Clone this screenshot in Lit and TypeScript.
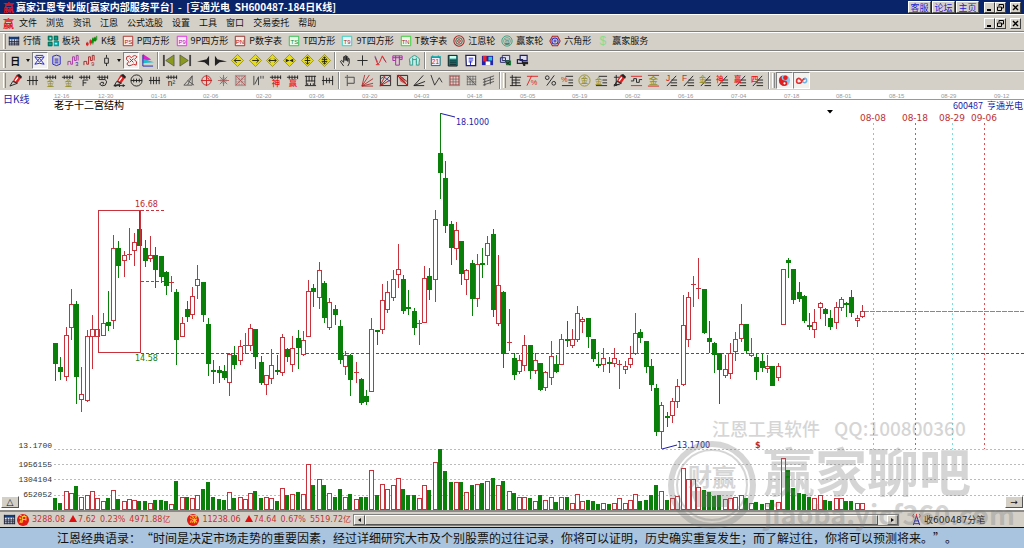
import { LitElement, html, svg, css } from "lit";
import { customElement, property } from "lit/decorators.js";

type Layer = { s?: string; f?: string; d?: string; w?: number; t?: string; x?: number; y?: number; z?: number };
const s = (c: string, d: string, w = 1): Layer => ({ s: c, d, w });
const f = (c: string, d: string): Layer => ({ f: c, d });
const t = (c: string, text: string, x: number, y: number, z: number): Layer => ({ f: c, t: text, x, y, z });

const K = "#222";
const R = "#d22";
const Y = "#e6dc1e";
const O = "#94902a";
const ring = (x: number, y: number, r: number) => `M${x - r} ${y}a${r} ${r} 0 1 0 ${2 * r} 0a${r} ${r} 0 1 0 ${-2 * r} 0`;
const comb = "M1 3.5H13M3.5 1.5V5.5M6.5 1.5V5.5M9.5 1.5V5.5M12.5 1.5V5.5";
const fan = "M1 12.5H13M1 12.5L13 9.5M1 12.5L12 5M1 12.5L7 1.5";
const mesh = "M2 2.5H12M2 5.5H12M2 8.5H12M2 11.5H12M2.5 2V12M5.5 2V12M8.5 2V12M11.5 2V12";
const steps = "M6 12.5H13M6 9.5H13M7 6.5H13M2 13L12 2";
const frame = "M1.5 1.5H12.5V12.5H1.5Z";
const diamond = [f(Y, "M7 .5L13.5 7L7 13.5L.5 7Z"), s("#8a8418", "M7 .5L13.5 7L7 13.5L.5 7Z", 0.8)];
const pencil = [f("#e02020", "M4 8L8 1L13 4L9 10Z"), f("#222", "M8 1L11 0L14 3L13 5Z"), s(K, "M4 8L1 13L9 10M4 8L9 10"), f("#fff", "M6 7L9 3L10 4L7 8Z")];

const ICONS: Record<string, Layer[]> = {
  table: [f("#ddeaff", "M1 2H13V12H1Z"), f("#123c7c", "M1 2H13V5H1Z"), s("#223", "M1.500 2V12M4.500 5V12M7.500 5V12M10.500 5V12M12.500 2V12M1 7.500H13M1 9.500H13M1 11.500H13")],
  blocks: [f("#0b9a9a", "M1 1H6V6H1ZM8 1H13V6H8ZM1 8H6V13H1ZM8 7H14V13H8Z"), s("#064", "M1.500 1.500H6V6H1.500ZM8.500 1.500H12.500V6H8.500ZM1.500 8.500H6V12.500H1.500Z"), f("#8ff", "M3 3H5V5H3ZM9 9H12V11H9Z")],
  kline: [s(R, "M1.500 8V13M5.500 5V12M10.500 2V8"), f(R, "M0 9H3V12H0ZM4 6H7V10H4Z"), f("#0a8a0a", "M7 4H9V9H7ZM9 3H12V7H9Z"), s("#0a8a0a", "M8 3V11M12.500 1V6")],
  ps: [f("#fbe9e4", frame), s("#a22", frame), t("#a22", "PS", 3, 10, 7)],
  p9: [f("#fce8fa", frame), s("#d2d", frame), t("#a1a", "P9", 3, 10, 7)],
  pn: [f("#fbe9e4", frame), s("#822", frame), t("#a11", "PN", 2, 10, 7)],
  ts: [f("#eafbe8", frame), s("#2b4", frame), t("#184", "TS", 3, 10, 7)],
  t9: [f("#e4fbf8", frame), s("#2cb", frame), t("#a22", "T9", 3, 10, 7)],
  tn: [f("#eafbe8", frame), s("#2c2", frame), t("#a22", "TN", 2, 10, 7)],
  wheel: [s("#a22", ring(7, 7, 6), 1.2), s("#353", ring(7, 7, 3.800)), s("#a22", ring(7, 7, 1.600))],
  winner: [s("#2a9a7a", ring(7, 7, 6)), s("#2a7a5a", ring(7, 7, 4), 0.6), t("#276", "赢", 4, 10, 6)],
  hex: [s("#a22", "M4 1.500H10L13 7L10 12.500H4L1 7Z", 1.2), s("#22c", ring(7, 7, 3.600), 1.2), s("#22c", ring(7, 7, 1.200))],
  dollar: [t("#8adc8a", "$", 3, 12, 14)],

  sq: [s("#22c", "M2 3Q7 5 12 3M2 3L5 7L2 11Q7 9 12 11L9 7L12 3M3 1.500H11M5 7Q7 3 9 7Q7 10 5 7")],
  scroll: [s("#22c", "M3 2.500Q7 0 11 2.500V11Q7 14 3 11ZM5 5.500H9M5 7.500H9M5 9.500H9")],
  wave3: [s("#a3a", "M1 12V8H4V11H6V3H8V7H10V1.500H12V7"), t("#22a", "3", 9, 13, 6)],
  wave9: [s("#a22", "M1 12V8H4V11H6V3H8V7H10V1.500H12V7"), t("#a22", "9", 9, 13, 6)],
  candle: [s(K, "M7 1V4M7 10V13M5 4.500H9V10H5Z")],
  wheelr: [s("#b22", "M2 3Q5 1 7 4Q10 0 13 3L10 6Q14 8 12 12Q9 10 7 12Q4 14 2 11L4 8Q0 6 2 3M5 5L9 9M9 5L5 9")],
  flag: [f("#d2c", "M2 0L11 6L2 8Z"), f("#2bc", "M2 5L14 9L2 10Z"), s("#22a", "M2 1V13H13")],
  first: [f("#8a9a1e", "M13 1V13L4 7Z"), s("#444", "M2 1V13", 2), s("#444", "M13 1V13L4 7Z", 0.7)],
  last: [f("#8a9a1e", "M1 1V13L10 7Z"), s("#444", "M12 1V13", 2), s("#444", "M1 1V13L10 7Z", 0.7)],
  prev: [f(K, "M13 2V13L8 9ZM8 9L0 8L13 5Z")],
  next: [f(K, "M1 2V13L6 9ZM6 9L14 8L1 5Z")],
  dl: [...diamond, s(K, "M3.500 7H10.500M6 4.500L3.500 7L6 9.500")],
  dr: [...diamond, s(K, "M3.500 7H10.500M8 4.500L10.500 7L8 9.500")],
  dlr: [...diamond, s(K, "M3 7H11M5 5L3 7L5 9M9 5L11 7L9 9")],
  dx: [...diamond, f(K, "M3 5L7 7L3 9ZM11 5L7 7L11 9Z")],
  dud: [...diamond, s(K, "M7 3V11M5 5L7 3L9 5M5 9L7 11L9 9M4 7H10")],
  dv: [...diamond, s(K, "M7 3V11M5 5L7 3L9 5M5 9L7 11L9 9M4 6H10M4 8H10")],
  hand: [s(K, "M5 13L1.500 8L3 7L5 9V3H6.500V7V2H8V7V3H9.500V8V5H11V10L9.500 13")],
  cross: [s(K, "M7 1.500V12.500M1.500 7H12.500")],
  zig: [s("#44a", "M1 2L4 9M9 3L13 9", 0.7), s(R, "M1 3L4 11L6 9L9 2L13 9M2 11.500H6")],
  ribbon: [s("#a2a", "M2 2H12V6H9V12H5V7H2ZM5 2V7M9 2V6M2 4H12")],
  brain: [f("#c7ece6", ring(7, 7, 5)), s("#2a9a8a", "M2 9Q0 5 4 3Q7 0 10 3Q14 5 12 9V12H9V8M5 12H2V8M5 4V12M9 4V9M5 6H9")],
  cal: [f("#eef", "M2 3H12V13H2Z"), s("#066", "M2.500 3.500H12V12.500H2.500Z"), s("#0aa", "M4 1.500V4M10 1.500V4M2 3H13"), t("#c22", "21", 3, 11, 7)],
  calc: [f("#0a8a8a", "M2 1H12V13H2Z"), f("#cfe", "M4 2H11V5H4Z"), s(K, "M2.500 1.500H12V13H2.500ZM4 7.500H11M4 9.500H11M4 11.500H11")],
  note: [f("#fff", "M2 1H12V13H2Z"), s("#226", "M2 1.500H12.500V12.500H2.500Z", 1.4), s("#22c", "M5 4.500H10M5 6.500H10M5 8.500H9M7 8V12")],
  save: [f("#22a", "M1 2H13V12H1Z"), f("#e22", "M2 2H6V8H2Z"), f("#2cc", "M8 3H12V7H8Z"), f("#fff", "M5 8H10V12H5Z")],
  pcs: [f("#dde", "M3 1H12V7H3Z"), s("#226", "M3.500 1.500H11.500V7H3.500ZM1.500 4H7V9H1.500Z"), f("#1a7a3a", "M6 7H13V12H8Z"), s(K, "M7 8L12 12M12 8L8 11")],
  pcl: [f("#dde", "M4 1H12V6H4Z"), s("#226", "M4.500 1.500H12V7H4.500ZM1.500 6H7V10H1.500Z", 1.3), f(K, "M6 8H13V11H10V13H8Z")],

  pen: pencil,
  grid3: [s(K, "M1 7H13M4 2V12M7.500 2V12M11 2V12")],
  gold1: [s(K, comb), t(O, "金", 3, 13, 8)],
  gold2: [s(K, comb), t(O, "金", 4, 13, 8)],
  ff: [s(K, comb), s(K, "M5.500 13V6.500H11M5.500 9.500H9")],
  spiral: [s(K, comb), s(K, "M3 6H10Q13 8 10 12Q6 14 4 11Q5 8 8 9Q9 11 7 11")],
  penr: [...pencil, s(K, "M1 12.500H13M3 11V14M7 11V14M11 11V14")],
  circ: [s(K, ring(7, 7, 6)), s(K, "M1 7H13M4 5V9M7 5V9M10 5V9")],
  grid4: [s(K, "M1 7H13M3 3V11M6 3V11M9 3V11M12 3V11")],
  n2: [s(K, comb), t(K, "n²", 3, 13, 9)],
  angle: [s("#555", "M2 12H6L11 2V12L6 12M6 7L13 12M2 12L11 2")],
  target: [s("#a33", ring(7, 7, 5)), s("#c22", "M7 1V13M1 7H13M7 4Q10 4 10 7")],
  star: [s("#a44", "M7 1V13M1 7H13M3 3L11 11M11 3L3 11", 0.8), s("#777", ring(7, 7, 3), 0.7)],
  web: [s("#966", mesh, 0.5), s("#a44", "M2 2L12 12M12 2L2 12", 0.7), s("#777", frame, 0.6)],
  nq: [s("#444", "M2 2V12M3 11L7 3V12M9.500 2V5M12 2V5")],
  shen: [s(K, comb), t("#e11", "神", 3, 13, 9)],
  ying: [s(K, comb), t("#e11", "赢", 3, 13, 9)],
  lad: [s(K, "M1 2.500H13M2.500 2V12M5.500 2V8M8.500 2V8M11.500 2V12M2 7.500H12M1 12.500H13M4 10V12M7 10V12M10 10V12")],
  split: [s(K, "M2.500 2V12M6 4V10M9 4V10M12.500 2V12M1 7H13")],

  rect: [s("#444", "M3.500 3.500H11V10H3.500ZM3.500 1V3M1 3.500H3M3.500 10V13")],
  fanr: [s("#a22", "M1 13H13M1 13L13 10M1 13L13 5M1 13L9 1M1 13L4 1", 0.9)],
  boxr: [s(K, frame), s("#a22", "M1 13L13 1M1 13L13 6M1 13L7 1"), s("#44a", "M2 5L5 3L12 8")],
  boxd: [s(K, frame), f("#c55", "M2 2L8 4L12 12L5 8Z"), s("#a22", "M1 1L13 13M3 1L13 9")],
  fank: [s(K, "M1 12.500H12M1 12.500L13 8M1 12.500L11 1.500")],
  vee: [s(K, "M1 1L5 12L10 4L13 9", 0.9)],
  mesh1: [s("#944", mesh, 0.7), s("#666", frame, 0.6)],
  mesh2: [s("#555", mesh, 0.7), s("#a33", "M2 2L12 12", 0.8)],
  para: [s("#444", "M1 6L13 2M1 9L13 5M1 12L13 8M3 5V13M9 3V11", 0.9)],

  rule: [s(K, "M3.500 1V13M1 3.500H13M3 6.500H12M3 9.500H12M1 12.500H13M7.500 3V13")],
  zpc: [s(R, "M1 2.500H13M1 12.500L6 2"), t("#d22", "%", 5, 12, 8)],
  pct: [s(K, "M3 12.500L11 1.500"), s(K, ring(3.500, 4, 2)), s(K, ring(10.500, 10, 2))],
  pcs2: [s(K, "M5 2.500H13M8 6.500H13M8 9.500H13M1 12.500H13"), t("#d22", "%", 0, 9, 8)],
  goldc: [s(O, ring(7, 7, 6)), t(O, "金", 3, 10, 8)],
  golde: [s(K, "M4 2.500H13M8 6.500H13M8 9.500H13M1 12.500H13"), t(O, "金", 0, 11, 8)],
  penl: [s(K, "M1 3.500H7M1 11.500H7M3.500 1V13"), ...pencil],
  tree: [s(R, "M1 2.500H13M1 12.500H13"), s(K, "M1 7.500H4V5H7V9H10V6H13")],
  goldr: [s(R, "M1 1.500H13M1 13H13"), t(O, "金", 2, 11, 10)],
  jl: [s(K, steps), t("#d22", "J", 1, 8, 9)],
  fl: [s(K, steps), t("#d22", "F", 0, 8, 9)],
  gl: [s(K, steps), t(O, "金", 0, 9, 8)],
  sl: [s(K, steps), t("#e11", "神", 0, 9, 8)],
  yl: [s(K, steps), t("#e11", "赢", 0, 9, 8)],
  fo: [s(K, steps), t("#e11", "四", 0, 9, 8)],
  taiji: [f("#8bc6f0", ring(7, 7, 6)), f("#e02020", "M7 1A6 6 0 0 0 7 13A3 3 0 0 0 7 7A3 3 0 0 1 7 1Z"), f("#e02020", ring(8, 4, 2.500)), f("#fff", ring(7, 10, 1.200))],
  inf: [s("#d33", "M7 7Q4 3 2 6Q1 10 4 10Q7 10 8 7Q9 5 11 5", 1.8), s("#6bb3e6", "M8 8Q10 11 12.500 8Q13 4.500 10 4.500", 1.6)],
  antenna: [s("#22a", "M7 3L3.500 13M7 3L10.500 13M5 8.500H9M4 11.500H10"), s("#d33", "M4 1Q2 3 4 5M10 1Q12 3 10 5M7 1V4")],
};

@customElement("tool-icon")
class ToolIcon extends LitElement {
  @property() name = "";
  static styles = css`
    :host { display: block; flex: none; width: 13px; height: 13px; }
    svg { display: block; width: 100%; height: 100%; overflow: visible; font-family: "Liberation Sans", "Noto Sans CJK SC", sans-serif; font-weight: 500; }
  `;
  render() {
    return html`<svg viewBox="0 0 14 14" aria-hidden="true">
      ${(ICONS[this.name] ?? []).map((l) =>
        l.t
          ? svg`<text x=${l.x} y=${l.y} fill=${l.f} font-size=${l.z}>${l.t}</text>`
          : svg`<path d=${l.d} fill=${l.f ?? "none"} stroke=${l.s ?? "none"} stroke-width=${l.w ?? 1}></path>`
      )}
    </svg>`;
  }
}

/* One session per row: direction, high, body top, body bottom, low, volume top. */
const SESSIONS = `G343,343,364,381,498 G357,367,372,380,503 R327,335,376,381,491 R289,304,327,340,493 G301,304,377,404,486
R367,394,399,412,497 R330,336,400,402,495 R315,329,336,369,491 R329,329,336,336,498 R313,323,335,335,501
G291,322,326,331,498 R235,248,320,329,490 G241,248,266,278,499 R251,255,260,277,501 R228,254,255,260,499
R233,242,250,266,500 G210,229,246,246,501 G240,248,261,267,501 R236,255,258,262,503 G247,255,270,288,500
G256,256,277,283,500 G271,272,286,295,501 R276,282,283,292,504 G289,292,340,365,481 R317,323,336,337,497
G301,309,317,322,497 R287,296,314,319,498 R265,279,285,299,495 G282,282,315,322,489 G318,324,364,376,482
G360,370,372,384,497 G366,370,373,383,499 G365,371,378,380,500 R353,354,382,396,492 G346,355,365,369,498
R340,346,360,365,497 R333,345,346,354,499 R324,328,345,351,493 G329,329,357,369,491 G356,362,383,385,498
R375,375,384,395,497 R349,365,378,384,498 G355,370,371,375,501 R334,337,372,376,488 G348,349,357,362,495
R336,348,364,372,494 G330,338,348,369,492 R331,340,354,356,494 R280,291,336,336,464 G284,288,292,307,485
R262,270,297,309,479 G281,283,318,323,485 R298,302,327,330,493 G305,309,315,325,497 G320,326,360,364,489
R351,355,366,375,497 G354,355,380,396,494 R362,372,373,383,499 G378,379,403,405,497 G390,396,402,405,497
R318,329,391,392,470 G330,330,332,345,495 R284,300,329,334,484 R281,292,309,313,489 R270,279,297,301,485
R244,269,274,288,478 G275,279,311,314,489 G290,307,308,315,495 G308,311,328,335,495 R320,323,324,345,498
R266,278,322,322,485 G268,276,290,300,490 R210,219,279,302,462 G113,153,173,199,449 G161,178,226,233,471
G221,224,248,265,482 R222,230,248,260,482 G241,241,274,285,482 R269,270,279,295,492 G260,263,299,316,485
R254,264,298,307,484 G248,263,264,278,483 R236,243,255,265,481 G229,234,310,317,478 R255,285,323,326,485
G291,292,354,368,481 R309,342,342,351,491 G353,358,375,380,493 R355,360,371,374,497 R335,345,365,371,497
G345,345,371,379,498 R353,360,370,374,501 G363,363,390,391,495 R371,372,387,391,500 R341,356,377,385,497
G355,364,372,373,502 R334,339,364,364,497 G321,339,340,347,497 R329,339,345,348,503 R306,313,339,342,494
R317,319,321,333,501 G318,318,337,348,500 G339,339,359,362,501 G352,364,366,368,504 R348,358,364,372,503
G357,362,364,373,504 R348,358,363,367,503 R360,364,365,389,498 R361,366,369,374,503 R346,358,364,368,500
R313,333,353,355,494 G329,332,338,343,501 G341,341,367,373,500 G359,366,385,391,495 G384,388,432,436,485
R402,405,431,449,491 G412,416,418,427,500 R398,401,415,423,498 R379,386,401,408,496 R295,325,384,386,468
R292,297,339,347,479 R276,284,285,307,479 R258,288,289,299,487 G289,289,333,334,490 G321,338,342,353,492
G342,343,355,373,496 G353,353,370,404,495 R355,369,375,378,499 R343,353,373,379,498 R332,339,351,361,497
R304,324,338,342,495 G324,324,351,353,498 R338,353,355,357,503 G353,357,372,380,502 G354,361,368,372,504
R355,366,368,373,503 G366,366,386,386,500 R363,366,377,381,502 R269,269,324,325,458 G258,260,263,278,470
G269,269,300,304,488 G282,292,299,302,493 G295,296,321,323,494 G313,325,327,330,497 R309,322,329,338,498
R302,303,307,319,495 G308,309,314,326,500 G310,318,327,330,501 R302,307,322,329,498 R297,299,307,311,498
G302,303,304,317,501 G290,297,313,317,501 R315,318,320,327,503 R305,311,316,318,503`
  .split(/\s+/)
  .map((r) => ({ up: r[0] === "R", v: r.slice(1).split(",").map(Number) }));

const PITCH = 5.273;
const START = 55.6;
const RULER: [number, string][] = [
  [54, "12-16"], [98, "12-30"], [151, "01-16"], [203, "02-06"], [256, "02-20"], [309, "03-06"], [362, "03-20"], [414, "04-03"],
  [467, "04-18"], [520, "05-05"], [572, "05-19"], [625, "06-02"], [678, "06-16"], [731, "07-04"], [784, "07-18"], [836, "08-01"],
  [889, "08-15"], [941, "08-29"], [994, "09-12"],
];
const CYCLES: [number, string, string][] = [
  [873, "08-08", "#7fc8dc"], [915, "08-18", "#e05050"], [952, "08-29", "#7fdcdc"], [984, "09-06", "#e05050"],
];

@customElement("stock-chart")
class StockChart extends LitElement {
  static styles = css`
    :host { display: block; position: relative; background: #fff; }
    svg { display: block; width: 100%; height: auto; font-family: "Noto Sans CJK SC", sans-serif; }
    .crisp { shape-rendering: crispEdges; }
    .num { font: 8px "DejaVu Sans", sans-serif; }
    .date { font: 9px "DejaVu Sans", sans-serif; fill: #c03030; text-anchor: middle; }
    .tick { font: 6px "Liberation Sans", sans-serif; fill: #999; }
    .axis { font: 8px "Liberation Mono", monospace; fill: #333; text-anchor: end; }
    .red { fill: #c02828; }
    .green { fill: #128012; }
    .blue { fill: #1c1ca8; }
    .mark { font-weight: bold; }
    .title { font-size: 10px; }
    .code { font-size: 9px; text-anchor: end; }
    .corner { position: absolute; bottom: 2px; width: 18px; height: 12px; padding: 0; box-sizing: border-box; border: 1px solid; border-color: #fff #555 #555 #fff; background: #d4d0c8; font: 9px/9px "DejaVu Sans", sans-serif; color: #111; }
    .left { left: 1px; }
    .right { right: 1px; }
  `;
  candle(up: boolean, v: number[], i: number) {
    const c = Math.floor(START + i * PITCH);
    const [hi, top, bot, lo, vol] = v;
    const body = Math.max(bot - top, 1);
    return up
      ? svg`<path d="M${c + 0.5} ${hi}V${top}M${c + 0.5} ${top + body}V${lo}" stroke="#c8323c"></path>
          ${body < 2
            ? svg`<path d="M${c - 2} ${top + 0.5}H${c + 3}" stroke="#c8323c"></path>`
            : svg`<rect x=${c - 1.5} y=${top + 0.5} width="4" height=${body} fill="#fff" stroke="#c8323c"></rect>`}
          <rect x=${c - 1.5} y=${vol + 0.5} width="4" height=${509 - vol} fill="#fff" stroke="#c8323c"></rect>`
      : svg`<path d="M${c + 0.5} ${hi}V${lo}" stroke="#0a800a"></path>
          <rect x=${c - 2} y=${top} width="5" height=${Math.max(body, 2)} fill="#0a800a"></rect>
          <rect x=${c - 2} y=${vol} width="4" height=${510 - vol} fill="#0a800a"></rect>`;
  }
  render() {
    return html`<svg viewBox="0 90 1024 420" role="img" aria-label="日K线">
        <g class="crisp" fill="none">
          <path d="M53 99.5H1024" stroke="#999"></path>
          <path d="M54 449.5H1024M54 464.5H1024M54 479.5H1024M54 495.5H1024" stroke="#bbb" stroke-dasharray="2 2"></path>
          <path d="M141 353.5H1024" stroke="#128012" stroke-dasharray="3 2"></path>
          <path d="M864 311.5H1024" stroke="#888" stroke-dasharray="5 1"></path>
          ${CYCLES.map(([x, , c]) => svg`<path d="M${x + 0.5} 123V449" stroke=${c} stroke-dasharray="2 3"></path>`)}
          ${SESSIONS.map((r, i) => this.candle(r.up, r.v, i))}
          <path d="M98.5 210.5H140.5V352.5H98.5Z" stroke="#c8323c"></path>
          <path d="M141 210.5H166M141 281.5H166" stroke="#c8323c" stroke-dasharray="3 2"></path>
        </g>
        <path d="M441 113.5L455 117M662 449L677 445" stroke="#1c1ca8" fill="none"></path>
        <path d="M827 110H833L830 113.5Z" fill="#000"></path>
        ${RULER.map(([x, l]) => svg`<text class="tick" x=${x} y="98">${l}</text>`)}
        ${CYCLES.map(([x, l]) => svg`<text class="date" x=${x} y="121">${l}</text>`)}
        <text class="title blue" x="3" y="103">日K线</text>
        <text class="title" x="54" y="109">老子十二宫结构</text>
        <text class="code blue" x="1023" y="109">600487&nbsp; 亨通光电</text>
        <text class="num red" x="135" y="207">16.68</text>
        <text class="num green" x="135" y="361">14.58</text>
        <text class="num blue" x="456" y="125">18.1000</text>
        <text class="num blue" x="677" y="448">13.1700</text>
        <text class="num red mark" x="755" y="448">$</text>
        <text class="axis" x="52" y="448">13.1700</text>
        <text class="axis" x="52" y="467">1956155</text>
        <text class="axis" x="52" y="482">1304104</text>
        <text class="axis" x="52" y="497">652052</text>
      </svg>
      <button class="corner left" aria-label="展开">△</button>
      <button class="corner right" aria-label="向右">→</button>`;
  }
}

const MENU = ["文件", "浏览", "资讯", "江恩", "公式选股", "设置", "工具", "窗口", "交易委托", "帮助"];
const VIEWS: [string, string][] = [
  ["table", "行情"], ["blocks", "板块"], ["kline", "K线"], ["ps", "P四方形"], ["p9", "9P四方形"], ["pn", "P数字表"], ["ts", "T四方形"],
  ["t9", "9T四方形"], ["tn", "T数字表"], ["wheel", "江恩轮"], ["winner", "赢家轮"], ["hex", "六角形"], ["dollar", "赢家服务"],
];
const words = (x: string) => x.split(" ");
const NAV = words("first last prev next dl dr dlr dx dud dv");
const EDIT = words("hand cross zig ribbon brain");
const FILES = words("cal calc note save pcs pcl");
const DRAW_A = words("pen grid3 gold1 gold2 ff spiral penr circ grid4 n2 angle target star web nq shen ying lad split");
const DRAW_B = words("rect fanr boxr boxd fank vee mesh1 mesh2 para");
const DRAW_C = words("rule zpc pct pcs2 goldc golde penl tree goldr jl fl gl sl yl fo");

@customElement("app-root")
class AppRoot extends LitElement {
  static styles = css`
    :host { display: block; position: relative; min-height: 100vh; overflow: hidden; background: #a9c4de; font: 9px/12px "Noto Sans CJK SC", sans-serif; color: #111; }
    button { font: inherit; color: inherit; padding: 0; border: 0; background: none; white-space: nowrap; }
    header, nav, .bar, .status { display: flex; align-items: center; box-sizing: border-box; }
    header { height: 14px; background: #0a246a; color: #fff; padding: 0 3px; gap: 1px; font-size: 10px; font-weight: bold; }
    h1 { margin: 0; font: inherit; flex: 1; white-space: pre; }
    .logo { color: #e01818; font-weight: bold; font-size: 11px; width: 12px; line-height: 12px; }
    .link { width: 23px; height: 12px; line-height: 11px; text-align: center; background: #d4d0c8; color: #2222d8; font-size: 9px; font-weight: normal; border: 1px solid; border-color: #fff #555 #555 #fff; box-sizing: border-box; text-decoration: none; }
    .win { display: flex; margin-left: 4px; }
    .win button { width: 11px; height: 11px; box-sizing: border-box; background: #d4d0c8; border: 1px solid; border-color: #fff #404040 #404040 #fff; }
    .win button:last-child { margin-left: 4px; }
    .win svg { display: block; width: 9px; height: 9px; }
    nav { height: 17px; background: #d4d0c8; border-top: 1px solid #fff; padding: 0 3px; }
    .menu { display: flex; flex: 1; gap: 9px; padding-left: 4px; }
    .bar { background: #d4d0c8; border-top: 1px solid #808080; box-shadow: inset 0 1px #fff; height: 20px; padding-left: 3px; }
    .views { height: 19px; gap: 6px; }
    .view { display: flex; align-items: center; gap: 3px; }
    .view tool-icon { width: 12px; height: 12px; }
    .grip { width: 1px; height: 15px; border-left: 1px solid #fff; border-right: 1px solid #888; margin-right: 1px; flex: none; }
    .views .grip { margin-right: -4px; }
    .sep { width: 0; height: 17px; border-left: 1px solid #888; border-right: 1px solid #fff; flex: none; margin: 0 2px; }
    .tight .sep { margin: 0 1px; }
    .group { display: flex; justify-content: space-between; flex: none; }
    .tool { display: flex; align-items: center; justify-content: center; width: 17px; height: 17px; box-sizing: border-box; }
    .on { background: #f2f1ee; border: 1px solid; border-color: #808080 #fff #fff #808080; }
    .drop { width: 8px; }
    .drop::after { content: ""; border: 2px solid transparent; border-top: 3px solid #111; border-bottom: 0; }
    .day { font-size: 10px; font-weight: bold; }
    .period { width: 149px; }
    .nav { width: 173px; }
    .edit { width: 86px; }
    .files { width: 104px; }
    .da { width: 329px; }
    .db { width: 155px; }
    .dc { width: 259px; }
    .status { height: 17px; background: #d4d0c8; border-top: 2px solid #8c8a86; font-family: "DejaVu Sans", "Noto Sans CJK SC", sans-serif; font-size: 8px; color: #c83232; padding-left: 3px; }
    .quotes { display: flex; align-items: center; width: 350px; overflow: hidden; flex: none; white-space: nowrap; gap: 4px; }
    .coin { flex: none; width: 12px; height: 12px; margin: 0 -1px 0 -3px; border-radius: 50%; background: #e01818; color: #fc3; font-weight: bold; text-align: center; }
    .second { margin-left: 13px; }
    .up::before { content: ""; display: inline-block; border: 4px solid transparent; border-bottom: 7px solid #e01010; border-top: 0; margin-right: 1px; }
    .scroll { display: flex; flex: 1; height: 12px; background: #e8e6e1; border: 1px solid #808080; box-sizing: border-box; }
    .scroll button { width: 11px; background: #d4d0c8; border: 1px solid; border-color: #fff #555 #555 #fff; display: flex; align-items: center; justify-content: center; flex: none; }
    .thumb { flex: 1; background: #d4d0c8; border: 1px solid; border-color: #fff #555 #555 #fff; margin-right: 9px; }
    .scroll i { border: 2px solid transparent; }
    .scroll .l { border-right: 3px solid #111; border-left: 0; }
    .scroll .r { border-left: 3px solid #111; border-right: 0; }
    .feed { display: flex; align-items: center; gap: 1px; width: 114px; flex: none; margin-left: 11px; color: #222; font-size: 9px; }
    footer { border-top: 1px solid #111; background: #a9c4de; padding-left: 57px; font-size: 12px; line-height: 20px; white-space: nowrap; overflow: hidden; text-spacing-trim: space-all; }
    .mark { position: absolute; left: 0; top: 0; width: 100%; pointer-events: none; font-family: "Noto Sans CJK SC", sans-serif; fill: #787878; opacity: 0.3; }
  `;
  windowButtons() {
    return html`<div class="win">
      <button aria-label="最小化"><svg viewBox="0 0 9 9"><path d="M2 7H6" stroke="#000" stroke-width="2"></path></svg></button>
      <button aria-label="还原"><svg viewBox="0 0 9 9"><path d="M3 3V1.500H7.500V5H6M1.500 4H5.500V7.500H1.500Z" stroke="#000" fill="none"></path></svg></button>
      <button aria-label="关闭"><svg viewBox="0 0 9 9"><path d="M2 2L7 7M7 2L2 7" stroke="#000" stroke-width="1.400"></path></svg></button>
    </div>`;
  }
  tool(name: string, on = false) {
    return html`<button class="tool ${on ? "on" : ""}" aria-label=${name}><tool-icon name=${name}></tool-icon></button>`;
  }
  group(cls: string, names: string[]) {
    return html`<div class="group ${cls}">${names.map((n) => this.tool(n))}</div>`;
  }
  render() {
    return html`
      <header>
        <span class="logo">赢</span>
        <h1>赢家江恩专业版[赢家内部服务平台]  -  [亨通光电  SH600487-184日K线]</h1>
        <a class="link" href="#">客服</a><a class="link" href="#">论坛</a><a class="link" href="#">主页</a>
        ${this.windowButtons()}
      </header>
      <nav>
        <span class="logo">赢</span>
        <div class="menu">${MENU.map((m) => html`<button>${m}</button>`)}</div>
        ${this.windowButtons()}
      </nav>
      <div class="bar views">
        <span class="grip"></span>
        ${VIEWS.map(([i, l]) => html`<button class="view"><tool-icon name=${i}></tool-icon>${l}</button>`)}
      </div>
      <div class="bar tight">
        <span class="grip"></span>
        <div class="group period">
          <button class="tool day">日</button><button class="tool drop" aria-label="周期"></button>
          ${this.tool("sq", true)}${this.tool("scroll")}${this.tool("wave3")}${this.tool("wave9")}${this.tool("candle")}
          <button class="tool drop" aria-label="样式"></button>
          ${this.tool("wheelr", true)}${this.tool("flag")}
        </div>
        <span class="sep"></span>${this.group("nav", NAV)}
        <span class="sep"></span>${this.group("edit", EDIT)}
        <span class="sep"></span>${this.group("files", FILES)}
      </div>
      <div class="bar">
        <span class="grip"></span>${this.group("da", DRAW_A)}
        <span class="sep"></span>${this.group("db", DRAW_B)}
        <span class="sep"></span><span class="grip"></span>${this.group("dc", DRAW_C)}
        <span class="sep"></span><span class="grip"></span>${this.tool("taiji", true)}${this.tool("inf", true)}
      </div>
      <stock-chart></stock-chart>
      <div class="status">
        <div class="quotes">
          <tool-icon name="table"></tool-icon>
          <span class="coin">沪</span>
          <span>3288.08</span><span class="up">7.62</span><span>0.23%</span><span>4971.88亿</span>
          <span class="coin second">深</span>
          <span>11238.06</span><span class="up">74.64</span><span>0.67%</span><span>5519.72亿</span>
        </div>
        <div class="scroll">
          <button aria-label="向左"><i class="l"></i></button>
          <div class="thumb"></div>
          <button aria-label="向右"><i class="r"></i></button>
        </div>
        <div class="feed"><tool-icon name="antenna"></tool-icon>收600487分笔</div>
      </div>
      <footer>江恩经典语录：“时间是决定市场走势的重要因素，经过详细研究大市及个别股票的过往记录，你将可以证明，历史确实重复发生；而了解过往，你将可以预测将来。”。</footer>
      <svg class="mark" viewBox="0 0 1024 548" aria-hidden="true">
        <text x="712" y="436" font-size="18" font-weight="500">江恩工具软件</text>
        <text x="834" y="436" font-size="19" font-weight="500">QQ:100800360</text>
        <text x="763" y="492" font-size="52" font-weight="bold">赢家聊吧</text>
        <text x="764" y="525" font-size="27" font-weight="bold">jiaoba.yicf360.com</text>
        <circle cx="712" cy="485" r="41" fill="none" stroke="#787878" stroke-width="6"></circle>
        <circle cx="712" cy="485" r="35" fill="none" stroke="#787878" stroke-width="2"></circle>
        <text x="688" y="486" font-size="24" font-weight="bold">财赢</text>
        <path d="M690 491H735L728 507H697Z"></path>
      </svg>
    `;
  }
}
